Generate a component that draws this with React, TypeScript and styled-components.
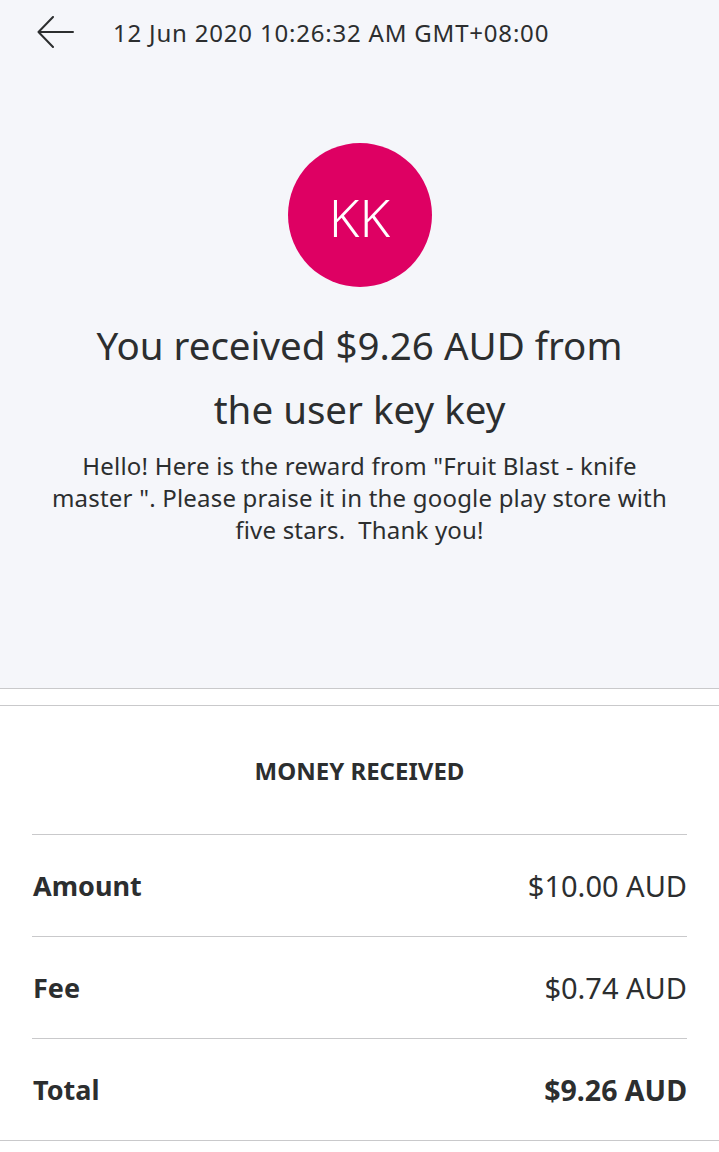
import React from 'react';
import styled, { createGlobalStyle } from 'styled-components';

const GlobalStyle = createGlobalStyle`
  html, body {
    margin: 0;
    padding: 0;
    background: #ffffff;
  }
  body {
    font-family: "Noto Sans", "Open Sans", Arial, sans-serif;
    color: #2c2e2f;
    -webkit-font-smoothing: antialiased;
  }
`;

const Page = styled.div`
  width: 719px;
  min-height: 1152px;
  display: flex;
  flex-direction: column;
  background: #ffffff;
`;

const Summary = styled.section`
  background: #f5f6fa;
  border-bottom: 1px solid #c9c9cb;
  height: 689px;
  box-sizing: border-box;
  display: flex;
  flex-direction: column;
  align-items: center;
`;

const TopBar = styled.header`
  align-self: stretch;
  height: 64px;
  display: flex;
  align-items: center;
  gap: 38px;
  padding-left: 37px;
`;

const BackButton = styled.button`
  border: 0;
  padding: 0;
  background: transparent;
  display: flex;
  cursor: pointer;
`;

const Timestamp = styled.span`
  font-size: 24px;
  letter-spacing: 0.8px;
  color: #2c2e2f;
`;

const Avatar = styled.div`
  margin-top: 79px;
  width: 144px;
  height: 144px;
  border-radius: 50%;
  background: #de0063;
  color: #ffffff;
  display: flex;
  align-items: center;
  justify-content: center;
  font-size: 52px;
  font-weight: 300;
  padding-top: 2px;
  box-sizing: border-box;
`;

const Headline = styled.h1`
  margin: 26px 0 0;
  font-size: 38.5px;
  font-weight: 400;
  line-height: 64px;
  text-align: center;
  max-width: 560px;
`;

const Note = styled.p`
  margin: 9px 0 0;
  padding: 0 46px;
  font-size: 24px;
  letter-spacing: 0.2px;
  line-height: 32px;
  text-align: center;
`;

const Details = styled.section`
  margin-top: 16px;
  border-top: 1px solid #c9c9cb;
  border-bottom: 1px solid #c9c9cb;
  display: flex;
  flex-direction: column;
`;

const DetailsTitle = styled.h2`
  margin: 0 32px;
  height: 128px;
  display: flex;
  align-items: center;
  justify-content: center;
  font-size: 24px;
  font-weight: 700;
  border-bottom: 1px solid #c9c9cb;
`;

const Row = styled.div<{ $last?: boolean }>`
  margin: 0 32px;
  height: 101px;
  display: flex;
  align-items: center;
  justify-content: space-between;
  border-bottom: ${({ $last }) => ($last ? '0' : '1px solid #c9c9cb')};
`;

const Label = styled.span`
  font-size: 27px;
  font-weight: 700;
  padding-left: 1px;
`;

const Value = styled.span<{ $strong?: boolean }>`
  font-size: ${({ $strong }) => ($strong ? '28.5px' : '29px')};
  font-weight: ${({ $strong }) => ($strong ? 700 : 400)};
`;

const ArrowLeft = () => (
  <svg width="38" height="32" viewBox="0 0 38 32" fill="none">
    <path d="M36 16H2M16 1L1.5 16 16 31" stroke="#2c2e2f" strokeWidth="2" strokeLinecap="round" strokeLinejoin="round" />
  </svg>
);

const rows = [
  { label: 'Amount', value: '$10.00 AUD' },
  { label: 'Fee', value: '$0.74 AUD' },
  { label: 'Total', value: '$9.26 AUD', strong: true },
];

const App = () => (
  <Page>
    <GlobalStyle />
    <Summary>
      <TopBar>
        <BackButton aria-label="Back">
          <ArrowLeft />
        </BackButton>
        <Timestamp>12 Jun 2020 10:26:32 AM GMT+08:00</Timestamp>
      </TopBar>
      <Avatar>KK</Avatar>
      <Headline>You received $9.26 AUD from the user key key</Headline>
      <Note>
        Hello! Here is the reward from &quot;Fruit Blast - knife master &quot;. Please praise it in the google play store with five stars.&nbsp; Thank you!
      </Note>
    </Summary>
    <Details>
      <DetailsTitle>MONEY RECEIVED</DetailsTitle>
      {rows.map((row, i) => (
        <Row key={row.label} $last={i === rows.length - 1}>
          <Label>{row.label}</Label>
          <Value $strong={row.strong}>{row.value}</Value>
        </Row>
      ))}
    </Details>
  </Page>
);

export default App;
